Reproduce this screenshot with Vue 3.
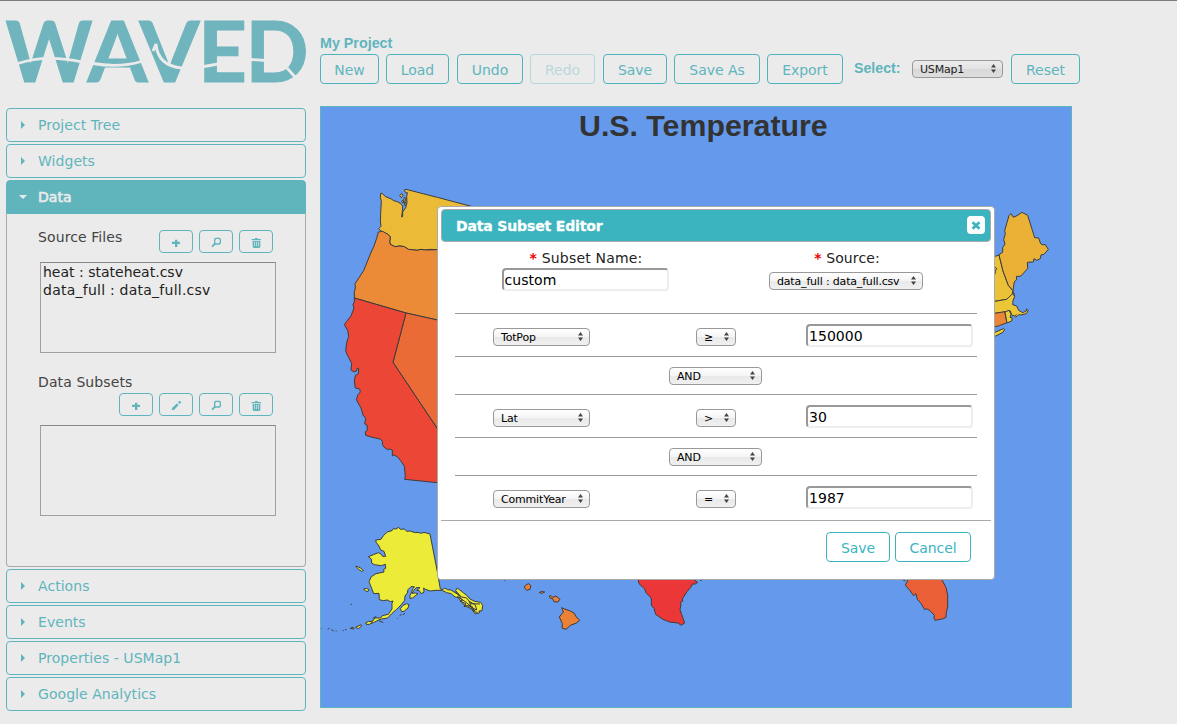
<script setup>
const tools = [
  { label: 'New', w: 59, gap: 7 },
  { label: 'Load', w: 63, gap: 8 },
  { label: 'Undo', w: 66, gap: 7 },
  { label: 'Redo', w: 65, gap: 8, off: true },
  { label: 'Save', w: 64, gap: 7 },
  { label: 'Save As', w: 86, gap: 7 },
  { label: 'Export', w: 76, gap: 11 }
]
const top = ['Project Tree', 'Widgets']
const bottom = ['Actions', 'Events', 'Properties - USMap1', 'Google Analytics']
const rules = [
  { col: 'TotPop', op: '≥', val: '150000', join: 'AND' },
  { col: 'Lat', op: '>', val: '30', join: 'AND' },
  { col: 'CommitYear', op: '=', val: '1987' }
]
const icons = {
  plus: 'M39 35H48V29H55V35H63V42H55V51H48V42H39Z',
  pencil: 'M38 52L40 44L54 31L59 36L46 50ZM57 28L62 23L67 28L62 33Z',
  zoom: 'M49 23H62L66 27V40L62 44H49L41 52L37 49L45 40V27ZM51 27L49 29V38L51 40H60L62 38V29L60 27Z',
  trash: 'M48 24H56V27H66V31H38V27H48ZM41 33H64V51L61 54H44L41 51ZM45 35V49H47V35ZM51 35V49H53V35ZM57 35V49H59V35Z'
}
const sourceIcons = ['plus', 'zoom', 'trash']
const subsetIcons = ['plus', 'pencil', 'zoom', 'trash']
const arrows = 'M0 3.500L2.500 0L5 3.500ZM0 5.500H5L2.500 9Z'
</script>

<template>
  <div class="page">
    <aside class="side">
      <svg class="logo" width="306" height="107" viewBox="0 1 306 107">
        <g class="logo-text">
          <text x="5.500" y="81.700" textLength="87" lengthAdjust="spacingAndGlyphs">W</text>
          <text x="87.500" y="81.700" textLength="60" lengthAdjust="spacingAndGlyphs">A</text>
          <text x="139.500" y="81.700" textLength="60" lengthAdjust="spacingAndGlyphs">V</text>
          <text x="198" y="81.700" textLength="49" lengthAdjust="spacingAndGlyphs">E</text>
          <text x="245.500" y="81.700" textLength="63" lengthAdjust="spacingAndGlyphs">D</text>
        </g>
        <g class="logo-wave">
          <path d="M18 63.500Q46 54 82 62" />
          <path d="M93 63.500Q120 68 141 61.500" />
          <path d="M153 51L156 44Q158 66 182 68" />
          <path d="M204 66.500L218 64" />
          <path d="M251 59.500L266 60.500" />
          <path d="M287 68L295 77" />
        </g>
      </svg>

      <nav class="accordion">
        <div v-for="t in top" :key="t" class="head"><i class="tri"></i>{{ t }}</div>
        <section>
          <div class="head open"><i class="tri down"></i>Data</div>
          <div class="panel">
            <div class="row">
              <span class="caption">Source Files</span>
              <div class="icons">
                <button v-for="i in sourceIcons" :key="i" class="icon-btn">
                  <svg width="32" height="21" viewBox="3 3 96 63"><path :d="icons[i]" fill-rule="evenodd" /></svg>
                </button>
              </div>
            </div>
            <div class="list"><div>heat : stateheat.csv</div><div class="wide">data_full : data_full.csv</div></div>
            <div class="caption second">Data Subsets</div>
            <div class="icons">
              <button v-for="i in subsetIcons" :key="i" class="icon-btn">
                <svg width="32" height="21" viewBox="3 3 96 63"><path :d="icons[i]" fill-rule="evenodd" /></svg>
              </button>
            </div>
            <div class="list"></div>
          </div>
        </section>
        <div v-for="t in bottom" :key="t" class="head"><i class="tri"></i>{{ t }}</div>
      </nav>
    </aside>

    <main class="main">
      <div class="project">My Project</div>
      <div class="toolbar">
        <button
          v-for="t in tools"
          :key="t.label"
          class="btn"
          :class="{ off: t.off }"
          :style="{ width: t.w + 'px', marginRight: t.gap + 'px' }"
        >{{ t.label }}</button>
        <span class="pick">Select:</span>
        <span class="select dim"><span>USMap1</span><svg width="5" height="9"><path :d="arrows" /></svg></span>
        <button class="btn reset">Reset</button>
      </div>

      <div class="canvas">
        <svg class="map" width="750" height="600" viewBox="321 107 750 600">
          <g class="land" transform="translate(320 170) scale(.33333)">
            <path fill="#ebba37" d="M176 176L183 169L181 153L182 130L184 94L181 82L182 70L186 70L197 80L214 87L221 92L232 95L241 100L248 108L247 125L245 141L248 140L248 126L257 113L261 98L260 81L262 68L257 68L253 60L258 58L352 82L480 116V245L352 239L330 238L316 240L300 238L294 241L265 238L253 230L240 228L225 230L211 223L209 216L211 201L204 193L188 186L181 181Z" />
            <path fill="#ebba37" d="M239 77L245 70L249 77L244 83ZM245 94L249 91L252 96L248 99ZM253 82L258 86L255 94L259 103L255 107L251 91Z" />
            <path fill="#eb8b37" d="M175 186L188 184L204 193L211 201L209 216L211 223L225 230L240 228L253 230L265 238L294 241L300 238L316 240L352 239H480V475L352 450L258 429L103 384L103 365L106 354L105 341L131 302L151 252L162 228L170 205Z" />
            <path fill="#eb6b37" d="M258 429L352 450L480 476V960L352 776L219 577Z" />
            <path fill="#ec4637" d="M103 384L258 429L219 577L352 776L480 960V953L352 938L254 928L256 918L253 889L242 872L232 860L221 855L217 858L217 840L209 837L202 839L192 831L187 823L188 814L180 807L153 801L137 796L136 785L142 781L141 765L134 762L137 745L129 735L123 714L109 689L114 674L121 666L119 657L106 654L103 634L106 616L115 611L116 595L111 595L110 603L102 606L93 600L95 580L81 553L77 542L80 517L86 500L83 481L73 464L80 454L93 438L102 414L99 404L103 396Z" />
          </g>
          <g class="land" transform="translate(320 510) scale(.33333)">
            <path fill="#ebeb38" d="M167 90L183 88L191 76L202 66L216 62L220 56L230 57L235 51L241 58L253 57L260 64L270 63L286 68L294 67L302 70L312 67L330 72L352 185L361 237L369 239L374 234L382 239L393 240L402 246L412 252L421 258L407 242L412 234L426 245L440 256L450 267L464 274L482 277L488 286L486 302L477 303L479 308L466 312L455 298L443 290L433 284L423 273L417 263L405 261L394 251L380 248L367 241L348 241L331 243L316 238L311 234L312 247L303 251L298 242L290 241L300 233L288 233L280 244L276 250L286 249L294 251L286 257L278 264L270 265L270 256L275 246L279 236L283 230L273 230L264 239L262 249L255 258L254 271L243 285L230 298L215 311L203 324L185 327L174 331L160 338L146 342L138 342L142 337L158 333L165 324L182 324L187 317L205 313L216 297L216 280L219 273L211 275L202 270L190 272L178 269L177 250L161 251L155 235L147 215L154 200L168 191L192 186L191 178L197 175L196 163L184 167L163 164L155 159L154 147L145 140L160 134L175 128L183 132L188 139L197 139L192 124L182 120L177 108L169 98Z" />
            <path fill="#ebeb38" d="M107 169L113 170L122 174L130 182L124 184L115 177ZM131 237L140 235L147 239L144 244L138 244ZM241 296L249 286L260 281L267 284L264 294L252 304L245 305ZM107 352L123 344L125 348L115 356ZM137 339L145 334L158 336L149 343L139 343ZM413 260L440 278L453 290L441 291L425 277ZM448 274L466 285L470 300L454 292ZM91 355L99 351L102 357Z" />
            <path class="speck" d="M0 356H5M23 357L28 355M34 359L41 363M47 363H50M68 362H71M75 359H79M232 327L233 325M239 317L245 313M249 314L255 310M92 283H96M158 325L169 319M177 332L190 338M552 210H557" />
            <path class="speck" d="M405 244L420 260L440 264L453 281L480 282M416 259L428 270L420 273L438 281L432 290L448 285L461 303L471 296M455 288L465 306L473 307" />
            <path fill="#eb8037" d="M613 229L617 227L619 224L626 221L633 227L630 238L620 241L615 235ZM658 248L664 244L674 246L666 250ZM688 258L692 256L698 262L708 258L720 268L714 276L702 275L698 266L690 264ZM725 293L734 297L751 303L762 309L769 321L779 331L768 340L753 345L738 358L726 354L727 341L718 321L730 306Z" />
          </g>
          <g class="land" transform="translate(980 190) scale(.33333)">
            <path fill="#ebc237" d="M0 190L46 199L57 195L69 243L85 286L99 302L97 310L99 316L91 326L45 334L0 341Z" />
            <path fill="#ebc737" d="M0 341L45 334L80 328L98 311L104 319L99 332L98 344L110 348L116 361L128 368L139 363L139 357L145 361L139 371L123 375L116 374L107 382L102 376L97 378L90 362L74 366L45 370H0Z" />
            <path fill="#eb8537" d="M0 372L45 370L74 365L81 398L58 407L35 413H0Z" />
            <path fill="#ebcf37" d="M75 366L87 361L93 373L90 382L97 384L95 393L81 399Z" />
            <path fill="#ebd337" d="M30 430L48 426L70 416L74 418L69 427L35 444Z" />
            <path fill="#ebb137" d="M57 194L68 187L68 173L75 162L71 149L76 131L74 122L87 77L93 71L100 82L111 77L126 67L143 76L164 143L176 144L182 161L189 165L195 163L205 178L192 193L183 195L181 206L170 211L162 206L160 216L142 217L143 236L135 244L127 254L120 259L109 259L110 269L103 275L99 302L85 286L69 243Z" />
            <path class="speck" d="M45 232L50 235L46 244L45 253M100 305L104 319M105 377L110 374" />
          </g>
          <g class="land" transform="translate(620 560) scale(.33333)">
            <path fill="#eb3737" d="M40 20H260L222 60L233 67L226 72H217L214 80L201 95L187 117L188 124L181 127L183 134L180 149L188 172L194 189L183 196L174 189L148 186L127 177L107 163L102 145L94 136L94 116L90 110L78 98L74 87L57 71L55 60Z" />
            <path fill="#eb5f37" d="M862 20H960L966 60L978 82L983 105V141L979 157L978 172L967 177L945 181L942 174L943 166L929 151L919 146L914 149L903 130L892 118L888 101L881 107L868 89L856 76L864 60Z" />
            <path class="speck" d="M240 61L246 60M850 61L856 63" />
          </g>
        </svg>
        <h2>U.S. Temperature</h2>
      </div>
    </main>

    <div class="dialog">
      <header>
        <span>Data Subset Editor</span>
        <button class="close"><svg width="10" height="9" viewBox="0 0 10 9"><path d="M1.500 1.200L8.500 7.800M8.500 1.200L1.500 7.800" /></svg></button>
      </header>
      <div class="body">
        <div class="fields">
          <div class="field name">
            <label><b>*</b> Subset Name:</label>
            <span class="input">custom</span>
          </div>
          <div class="field source">
            <label><b>*</b> Source:</label>
            <span class="select"><span>data_full : data_full.csv</span><svg width="5" height="9"><path :d="arrows" /></svg></span>
          </div>
        </div>
        <template v-for="r in rules" :key="r.col">
          <div class="rule">
            <span class="select col"><span>{{ r.col }}</span><svg width="5" height="9"><path :d="arrows" /></svg></span>
            <span class="select op"><span>{{ r.op }}</span><svg width="5" height="9"><path :d="arrows" /></svg></span>
            <span class="input">{{ r.val }}</span>
          </div>
          <div v-if="r.join" class="join">
            <span class="select"><span>{{ r.join }}</span><svg width="5" height="9"><path :d="arrows" /></svg></span>
          </div>
        </template>
      </div>
      <footer>
        <button class="btn save">Save</button>
        <button class="btn cancel">Cancel</button>
      </footer>
    </div>
  </div>
</template>

<style>
body { background: #ebebeb; overflow: hidden; }
</style>

<style scoped>
* { box-sizing: border-box; }
.page {
  position: relative; display: flex; width: 1177px; height: 724px;
  border-top: 1px solid #7d7b7d; background: #ebebeb; color: #444;
  font: 14px/18px "DejaVu Sans", sans-serif; letter-spacing: -.05px;
}
button { font: inherit; letter-spacing: inherit; padding: 0; margin: 0; background: none; }
.side { width: 306px; flex: none; }
.logo { display: block; overflow: visible; }
.logo-text { font: 700 83.500px Lato, sans-serif; fill: #70b5bd; stroke: #70b5bd; stroke-width: 1.100; letter-spacing: 0; }
.logo-wave { fill: none; stroke: #ebebeb; stroke-width: 2.800; }
.accordion { display: flex; flex-direction: column; gap: 2px; padding-left: 6px; letter-spacing: .05px; }
.head {
  display: flex; align-items: center; height: 34px; padding: 0 0 1px 31px;
  border: 1px solid #5fb5bd; border-radius: 4px; color: #60b5bd;
}
.head.open { background: #60b5bd; color: #ebebeb; -webkit-text-stroke: .6px #ebebeb; border-radius: 4px 4px 0 0; }
.tri { width: 0; height: 0; margin: 1px 13px 0 -17px; border: 4px solid transparent; border-left-color: #60b5bd; border-right: 0; }
.tri.down { border: 4px solid transparent; border-top-color: #ebebeb; border-bottom: 0; margin-left: -19px; margin-right: 11px; }
.panel { height: 353px; border: 1px solid #aaa; border-top: 0; border-radius: 0 0 4px 4px; padding: 14px 0 0 31px; }
.row { display: flex; justify-content: space-between; height: 34px; }
.caption { color: #444; letter-spacing: .1px; }
.icons { display: flex; gap: 6px; justify-content: flex-end; width: 235px; }
.row .icons { width: auto; margin: 2px 32px 0 0; }
.icon-btn { width: 34px; height: 23px; border: 1px solid #5fb5bd; border-radius: 4px; }
.icon-btn svg { display: block; fill: #60b5bd; }
.list { width: 236px; height: 91px; margin-left: 2px; border: 1px solid #a0a0a0; border-top-color: #888; padding-left: 2px; color: #222; letter-spacing: 0; }
.wide { letter-spacing: .24px; }
.second { margin: 20px 0 2px; }
.icons + .list { margin-top: 9px; }
.main { margin-left: 14px; }
.project { font: bold 14.300px/18px "Liberation Sans", sans-serif; color: #60b5bd; letter-spacing: 0; margin-top: 33px; height: 20px; }
.toolbar { display: flex; align-items: flex-start; height: 52px; }
.btn { height: 30px; border: 1px solid #4fb3be; border-radius: 4px; color: #60b5bd; padding-top: 1px; white-space: nowrap; }
.btn.off { opacity: .35; }
.pick { width: 58px; font: bold 14.200px/18px "Liberation Sans", sans-serif; color: #60b5bd; letter-spacing: 0; margin-top: 5px; }
.select {
  display: flex; align-items: center; justify-content: space-between; height: 18px; padding: 0 6px 0 7px;
  border: 1px solid #999; border-radius: 4px; background: linear-gradient(#fff, #f4f4f4 50%, #e9e9e9 51%, #f0f0f0);
  color: #000; font-size: 11px; line-height: 14px; letter-spacing: -.18px; white-space: nowrap;
}
.select span { padding-top: 2px; }
.select svg { fill: #444; flex: none; margin-bottom: 1px; }
.select.dim { width: 91px; margin: 6px 8px 0 0; background: linear-gradient(#ececec, #e2e2e2 50%, #d8d8d8 51%, #dedede); color: #222; }
.reset { width: 69px; }
.canvas { position: relative; width: 752px; height: 602px; border: 1px solid #5fb5bd; background: #6499eb; }
.map { display: block; }
.land { stroke: #3c3c3c; stroke-width: 3; stroke-linejoin: round; }
.speck { fill: none; }
h2 { position: absolute; top: 1px; left: 258px; margin: 0; color: #333; font: bold 30.300px/36px "Liberation Sans", sans-serif; letter-spacing: 0; white-space: nowrap; }
.dialog { position: absolute; left: 437px; top: 205px; width: 558px; height: 374px; padding: 2px 3px; background: #fff; border: 1px solid #aaa; border-radius: 4px; color: #222; }
.dialog header { display: flex; align-items: center; justify-content: space-between; height: 33px; padding: 0 5px 0 14px; border: 1px solid #aaa; border-radius: 4px; background: #3cb4bf; color: #fff; font-weight: bold; letter-spacing: -.15px; }
.dialog header span { -webkit-text-stroke: .3px #fff; }
.close { width: 18px; height: 18px; margin-top: -1px; border: 0; border-radius: 4px; background: #fff; display: flex; align-items: center; justify-content: center; }
.close svg { stroke: #3cb4bf; stroke-width: 2.800; }
.body { padding: 0 14px; height: 278px; }
.fields { display: flex; height: 71px; padding-top: 7px; }
.field { display: flex; flex-direction: column; align-items: center; }
.field b { color: #e00; }
.name { width: 260px; }
.name label { margin-left: 2px; letter-spacing: .18px; }
.name .input { margin-top: 1px; }
.source { margin-left: 54px; width: 154px; }
.source label { margin: 0 0 5px 2px; letter-spacing: .1px; }
.source .select { width: 154px; }
.input { display: block; width: 167px; height: 23px; padding: 0 1px; border: 2px solid #eee; border-top-color: #999; border-left-color: #999; border-radius: 4px; color: #000; line-height: 20px; letter-spacing: .05px; }
.rule { display: flex; align-items: flex-start; height: 43px; padding: 10px 0 0 38px; border-top: 1px solid #999; }
.rule .select { margin-top: 4px; }
.col { width: 97px; }
.op { width: 40px; margin: 0 70px 0 106px; }
.join { display: flex; height: 38px; padding: 10px 0 0 214px; border-top: 1px solid #999; }
.join .select { width: 93px; }
footer { display: flex; gap: 5px; justify-content: flex-end; padding: 11px 20px 0 0; border-top: 1px solid #aaa; }
footer .btn { color: #3cb4bf; border-color: #3cb4bf; }
.save { width: 64px; }
.cancel { width: 76px; }
</style>
